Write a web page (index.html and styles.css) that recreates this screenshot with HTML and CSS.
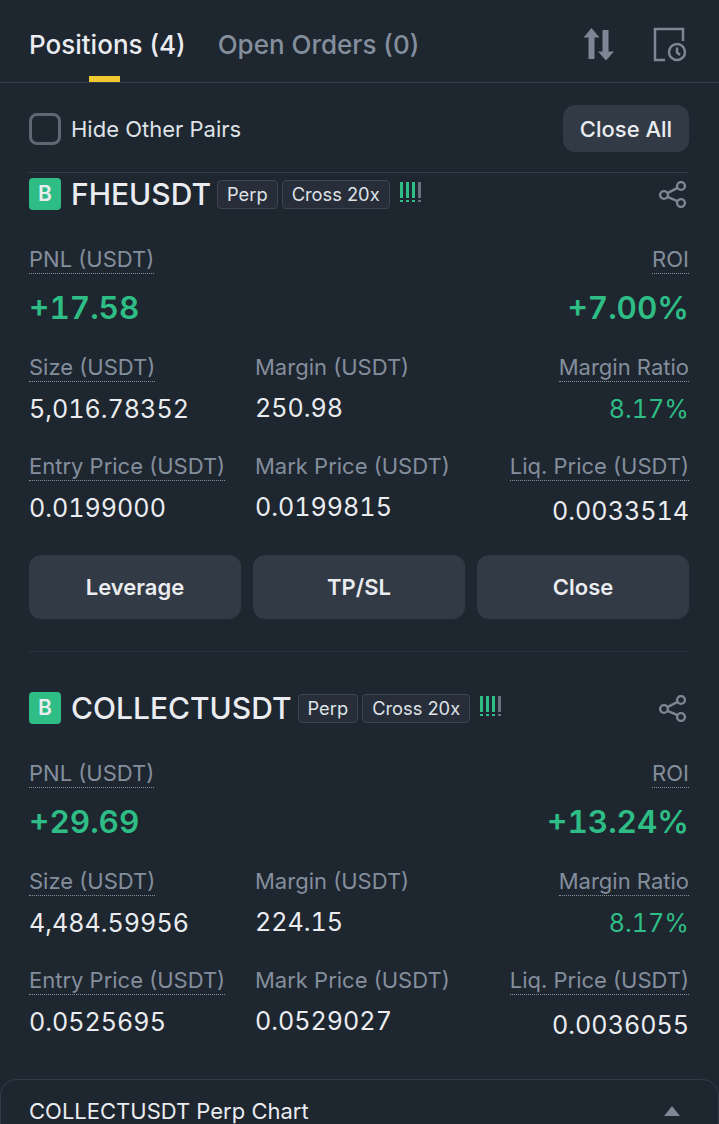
FILE: index.html
```html
<!DOCTYPE html>
<html>
	<head>
		<title>Positions</title>
		<link rel="stylesheet" href="styles.css">
	</head>
	<body>
		<div class="tabs">
			<div class="tab tab-active">Positions (4)</div>
			<div class="tab">Open Orders (0)</div>
			<div class="tab-icons">
				<svg class="sort-icon" width="32" height="33" viewBox="0 0 32 33" fill="#7d8694"><path d="M8.500 0 16.500 9.500H11.500V31H5.500V9.500H.5z"/><path d="M19.500 2H25.500V23.500H31L23 32.500 15 23.500H19.500z"/></svg>
				<svg width="34" height="35" viewBox="0 0 34 35" fill="none" stroke="#7d8694" stroke-width="2.500"><path d="M12 33H2V2H30V14"/><circle cx="24" cy="25" r="8"/><path d="M24 20.500V25.500L27 28"/></svg>
			</div>
		</div>

		<div class="filter-row">
			<label class="hide-pairs"><span class="checkbox"></span>Hide Other Pairs</label>
			<button class="close-all" type="button">Close All</button>
		</div>

		<div class="position position-first">
			<div class="position-head">
				<span class="side">B</span>
				<span class="symbol">FHEUSDT</span>
				<span class="tag">Perp</span>
				<span class="tag">Cross 20x</span>
				<span class="risk"><i></i><i></i><i></i><i class="off"></i></span>
				<svg class="share" width="27" height="27" viewBox="0 0 27 27" fill="none" stroke="#7d8694" stroke-width="2.400"><circle cx="5" cy="14" r="3.900"/><circle cx="22" cy="5" r="3.900"/><circle cx="22" cy="22" r="3.900"/><path d="M8.500 12.100 18.500 6.900M8.500 15.900 18.500 20.100"/></svg>
			</div>
			<div class="pnl-row">
				<div><span class="label dotted">PNL (USDT)</span><div class="pnl">+17.58</div></div>
				<div class="right"><span class="label dotted">ROI</span><div class="pnl">+7.00%</div></div>
			</div>
			<div class="stats">
				<div><span class="label dotted">Size (USDT)</span><div class="value">5,016.78352</div></div>
				<div><span class="label">Margin (USDT)</span><div class="value">250.98</div></div>
				<div class="right"><span class="label dotted">Margin Ratio</span><div class="value green">8.17%</div></div>
				<div><span class="label dotted">Entry Price (USDT)</span><div class="value">0.0199000</div></div>
				<div><span class="label">Mark Price (USDT)</span><div class="value">0.0199815</div></div>
				<div class="right"><span class="label dotted">Liq. Price (USDT)</span><div class="value low">0.0033514</div></div>
			</div>
			<div class="actions">
				<button type="button">Leverage</button>
				<button type="button">TP/SL</button>
				<button type="button">Close</button>
			</div>
		</div>

		<div class="position">
			<div class="position-head">
				<span class="side">B</span>
				<span class="symbol">COLLECTUSDT</span>
				<span class="tag">Perp</span>
				<span class="tag">Cross 20x</span>
				<span class="risk"><i></i><i></i><i></i><i class="off"></i></span>
				<svg class="share" width="27" height="27" viewBox="0 0 27 27" fill="none" stroke="#7d8694" stroke-width="2.400"><circle cx="5" cy="14" r="3.900"/><circle cx="22" cy="5" r="3.900"/><circle cx="22" cy="22" r="3.900"/><path d="M8.500 12.100 18.500 6.900M8.500 15.900 18.500 20.100"/></svg>
			</div>
			<div class="pnl-row">
				<div><span class="label dotted">PNL (USDT)</span><div class="pnl">+29.69</div></div>
				<div class="right"><span class="label dotted">ROI</span><div class="pnl">+13.24%</div></div>
			</div>
			<div class="stats">
				<div><span class="label dotted">Size (USDT)</span><div class="value">4,484.59956</div></div>
				<div><span class="label">Margin (USDT)</span><div class="value">224.15</div></div>
				<div class="right"><span class="label dotted">Margin Ratio</span><div class="value green">8.17%</div></div>
				<div><span class="label dotted">Entry Price (USDT)</span><div class="value">0.0525695</div></div>
				<div><span class="label">Mark Price (USDT)</span><div class="value">0.0529027</div></div>
				<div class="right"><span class="label dotted">Liq. Price (USDT)</span><div class="value low">0.0036055</div></div>
			</div>
		</div>

		<div class="chart-bar">
			<span>COLLECTUSDT Perp Chart</span>
			<span class="caret"></span>
		</div>
	</body>
</html>
```

FILE: styles.css
```css
* { box-sizing: border-box; }
html, body { height: 100%; overflow: hidden; }
body {
	margin: 0;
	background: #1e2630;
	color: #eaecef;
	font-family: "Inter", "Open Sans", sans-serif;
}
button { font-family: inherit; border: 0; color: #eaecef; background: #323a45; }

.tabs {
	display: flex;
	align-items: flex-start;
	height: 83px;
	padding: 0 32px 0 29px;
	gap: 32px;
	border-bottom: 1px solid #333b47;
}
.tab {
	position: relative;
	height: 82px;
	padding-top: 28px;
	font-size: 26px;
	line-height: 34px;
	font-weight: 500;
	color: #848e9c;
}
.tab-active { color: #eaecef; }
.tab-active::after {
	content: "";
	position: absolute;
	left: 60px;
	bottom: 0;
	width: 31px;
	height: 6px;
	background: #f0c92f;
}
.tab-icons { display: flex; align-items: flex-start; gap: 38px; margin-left: auto; padding-top: 27px; }
.sort-icon { margin-top: 1px; }

.filter-row {
	display: flex;
	align-items: center;
	justify-content: space-between;
	height: 90px;
	margin: 0 30px 0 29px;
	padding-top: 2px;
	border-bottom: 1px solid #333b47;
}
.hide-pairs { display: flex; align-items: center; gap: 10px; font-size: 22px; color: #dfe2e7; }
.checkbox { width: 32px; height: 32px; border: 3px solid #5f6772; border-radius: 8px; }
.close-all { width: 126px; height: 47px; border-radius: 12px; font-size: 22px; font-weight: 500; }

.position { padding: 0 30px 0 29px; }
.position-first { padding-top: 5px; }
.position-first::after {
	content: "";
	display: block;
	height: 1px;
	margin-top: 32px;
	background: #2b323d;
}
.position-first + .position { padding-top: 40px; }

.position-head { display: flex; align-items: center; height: 32px; }
.side {
	width: 32px;
	height: 32px;
	margin-right: 10px;
	border-radius: 4px;
	background: #2ebd85;
	color: #eaecef;
	font-size: 21px;
	font-weight: 600;
	line-height: 32px;
	text-align: center;
}
.symbol { font-size: 30px; font-weight: 500; margin-right: 6px; }
.tag {
	height: 29px;
	margin-right: 4px;
	padding: 0 9px;
	border: 1px solid #3c4450;
	border-radius: 4px;
	background: #272e39;
	font-size: 18.300px;
	line-height: 27px;
	color: #dfe2e7;
}
.risk { display: flex; gap: 3px; margin-left: 6px; height: 20px; margin-top: -4px; }
.risk i {
	width: 3px;
	height: 20px;
	background: linear-gradient(#2ebd85 0 16px, transparent 16px 18px, #2ebd85 18px);
}
.risk i.off { background: linear-gradient(#6b7380 0 16px, transparent 16px 18px, #6b7380 18px); }
.share { margin-left: auto; margin-right: 3px; }

.label { display: inline-block; font-size: 22px; line-height: 28px; color: #848e9c; }
.dotted { border-bottom: 1px dotted #848e9c; }
.right { text-align: right; }
.green { color: #2ebd85; }

.pnl-row { display: flex; justify-content: space-between; margin-top: 35px; }
.pnl { margin-top: 14px; font-size: 31.500px; line-height: 40px; font-weight: 600; color: #2ebd85; font-variant-numeric: tabular-nums; }

.stats {
	display: grid;
	grid-template-columns: 226px 1fr 1fr;
	row-gap: 26px;
	margin-top: 25px;
}
.value { margin-top: 10px; font-size: 25.100px; line-height: 34px; font-variant-numeric: tabular-nums; }
.value.green { color: #2ebd85; }
.value.low { margin-top: 13px; }

.actions { display: flex; gap: 12px; margin-top: 27px; }
.actions button { flex: 1; height: 64px; border-radius: 12px; font-size: 22px; font-weight: 600; }

.chart-bar {
	position: absolute;
	left: 0;
	right: 0;
	top: 1079px;
	height: 60px;
	display: flex;
	justify-content: space-between;
	padding: 17px 38px 0 28px;
	border: 1px solid #333b47;
	border-radius: 16px 16px 0 0;
	font-size: 22px;
	line-height: 28px;
}
.caret {
	width: 0;
	height: 0;
	margin-top: 9px;
	border-left: 8px solid transparent;
	border-right: 8px solid transparent;
	border-bottom: 10px solid #7d8694;
}
```
